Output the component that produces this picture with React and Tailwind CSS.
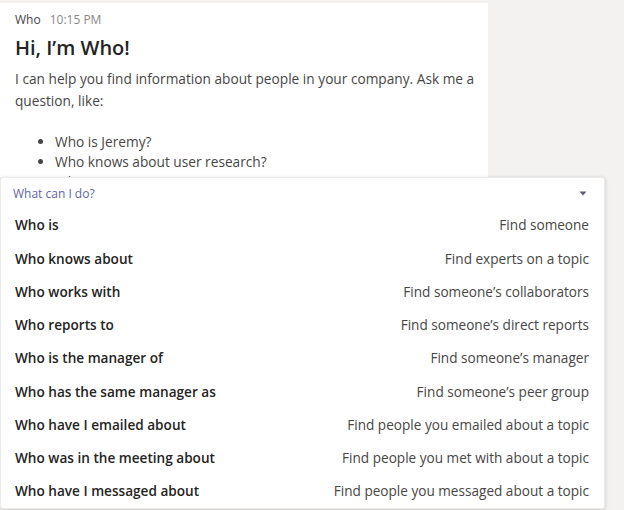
import React from 'react';

const commands = [
  ['Who is', 'Find someone'],
  ['Who knows about', 'Find experts on a topic'],
  ['Who works with', 'Find someone\u2019s collaborators'],
  ['Who reports to', 'Find someone\u2019s direct reports'],
  ['Who is the manager of', 'Find someone\u2019s manager'],
  ['Who has the same manager as', 'Find someone\u2019s peer group'],
  ['Who have I emailed about', 'Find people you emailed about a topic'],
  ['Who was in the meeting about', 'Find people you met with about a topic'],
  ['Who have I messaged about', 'Find people you messaged about a topic'],
];

export default function App() {
  return (
    <div
      className="w-[624px] h-[510px] bg-[#f3f2f1] pt-[3px] overflow-hidden"
      style={{ fontFamily: '"Open Sans", "Noto Sans", sans-serif' }}
    >
      {/* message card */}
      <div className="w-[488px] h-[174px] bg-white overflow-hidden pl-[15px] pr-2 pt-[8px]">
        <div className="flex items-baseline gap-[9px] text-[12px]">
          <span className="text-[#484644]">Who</span>
          <span className="text-[#8a8886]">10:15 PM</span>
        </div>
        <h1 className="mt-[7px] text-[20px] font-semibold text-[#252423] leading-6">Hi, I’m Who!</h1>
        <p className="mt-[8px] text-[13.7px] leading-[22px] text-[#484644] whitespace-nowrap">
          I can help you find information about people in your company. Ask me a
          <br />
          question, like:
        </p>
        <ul className="mt-[20px] list-disc pl-[40px] text-[13.7px] leading-[20px] text-[#484644] whitespace-nowrap">
          <li>Who is Jeremy?</li>
          <li>Who knows about user research?</li>
          <li>Who is Anna Lee’s manager?</li>
        </ul>
      </div>

      {/* suggestions popup */}
      <div className="w-[605px] bg-white rounded-[3px] shadow-[0_1px_4px_rgba(0,0,0,0.18)] border border-[#ecebea]">
        <div className="h-[31px] flex items-center justify-between pl-[12px] pr-[17px]">
          <span className="text-[12px] text-[#6264a7]">What can I do?</span>
          <svg width="8" height="5" viewBox="0 0 8 5">
            <path d="M0.5 0.5 L7.5 0.5 L4 4.5 Z" fill="#5b5a7a" />
          </svg>
        </div>
        {commands.map(([cmd, desc]) => (
          <div key={cmd} className="h-[33.25px] flex items-center justify-between pl-[14px] pr-[15px] text-[13.6px]">
            <span className="font-semibold text-[#252423]">{cmd}</span>
            <span className="text-[#484644]">{desc}</span>
          </div>
        ))}
      </div>
    </div>
  );
}
